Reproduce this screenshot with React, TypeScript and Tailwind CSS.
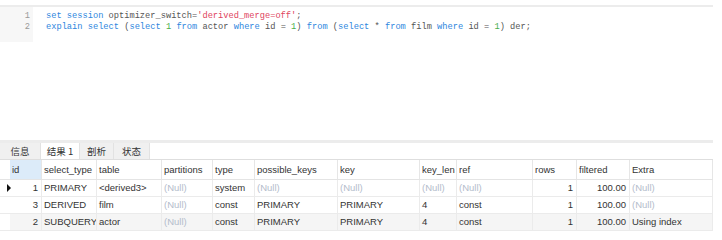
import React from 'react';

type Cell = { text: string; nul?: boolean; right?: boolean };

const cols = [
  { name: 'id', w: 32 },
  { name: 'select_type', w: 55 },
  { name: 'table', w: 65 },
  { name: 'partitions', w: 51 },
  { name: 'type', w: 42 },
  { name: 'possible_keys', w: 83 },
  { name: 'key', w: 82 },
  { name: 'key_len', w: 37 },
  { name: 'ref', w: 76 },
  { name: 'rows', w: 44 },
  { name: 'filtered', w: 53 },
  { name: 'Extra', w: 83 },
];

const N: Cell = { text: '(Null)', nul: true };
const t = (text: string): Cell => ({ text });
const r = (text: string): Cell => ({ text, right: true });

const rows: Cell[][] = [
  [r('1'), t('PRIMARY'), t('<derived3>'), N, t('system'), N, N, N, N, r('1'), r('100.00'), N],
  [r('3'), t('DERIVED'), t('film'), N, t('const'), t('PRIMARY'), t('PRIMARY'), t('4'), t('const'), r('1'), r('100.00'), N],
  [r('2'), t('SUBQUERY'), t('actor'), N, t('const'), t('PRIMARY'), t('PRIMARY'), t('4'), t('const'), r('1'), r('100.00'), t('Using index')],
];

const K = ({ children }: { children: React.ReactNode }) => <span className="text-[#2e86de]">{children}</span>;
const S = ({ children }: { children: React.ReactNode }) => <span className="text-[#e0445e]">{children}</span>;
const G = ({ children }: { children: React.ReactNode }) => <span className="text-[#4cae4c]">{children}</span>;

const tabs = ['信息', '结果 1', '剖析', '状态'];
const tabWidths = ['w-[41px]', 'w-[39px]', 'w-[34px]', 'w-[36px]'];

export default function App() {
  return (
    <div className="w-[722px] h-[240px] bg-white overflow-hidden font-['Liberation_Sans','Noto_Sans_CJK_SC',sans-serif] text-[#333]">
      {/* editor */}
      <div className="w-[713px] mt-[5px] h-[135px] border-t-2 border-[#ececec]">
        <div className="flex font-['Liberation_Mono','DejaVu_Sans_Mono',monospace] text-[8.7px] leading-[11px] text-[#555]">
          <div className="w-[33px] bg-[#f7f7f7] pt-[4px] pb-[9px] pr-[3px] text-right text-[#999]">
            <div>1</div>
            <div>2</div>
          </div>
          <div className="pl-[13px] pt-[4px] whitespace-pre">
            <div>
              <K>set</K> <K>session</K> optimizer_switch=<S>'derived_merge=off'</S>;
            </div>
            <div>
              <K>explain</K> <K>select</K> (<K>select</K> <G>1</G> <K>from</K> actor <K>where</K> id = <G>1</G>) <K>from</K> (<K>select</K> * <K>from</K> film <K>where</K> id = <G>1</G>) der;
            </div>
          </div>
        </div>
      </div>

      {/* result panel */}
      <div className="w-[713px]">
        <div className="h-[3px] bg-[#ececec]" />
        <div className="flex h-[17px] border-b border-[#dedede] text-[9.5px] leading-[17px] font-['Noto_Sans_CJK_SC',sans-serif]">
          {tabs.map((tab, i) => (
            <div
              key={tab}
              className={`${tabWidths[i]} text-center border-r border-[#e2e2e2] ${i === 1 ? 'bg-white' : 'bg-[#f0f0f0]'}`}
            >
              {tab}
            </div>
          ))}
        </div>

        <div className="text-[9.5px]">
          <div className="flex h-[20px] leading-[20px] border-b border-[#e4e4e4]">
            <div className="w-[10px] shrink-0" />
            {cols.map((c, i) => (
              <div
                key={c.name}
                style={{ width: c.w }}
                className={`shrink-0 pl-[2px] border-r border-[#e6e6e6] whitespace-nowrap ${i === 0 ? 'bg-[#dcebf9]' : ''}`}
              >
                {c.name}
              </div>
            ))}
          </div>
          {rows.map((row, ri) => (
            <div key={ri} className={`flex h-[17px] leading-[16px] border-b border-[#ebebeb] ${ri === 2 ? 'bg-[#f5f5f5]' : ''}`}>
              <div className="w-[10px] shrink-0 bg-white flex items-center pl-[7px]">
                {ri === 0 && (
                  <svg className="shrink-0" width="4" height="8" viewBox="0 0 4 8">
                    <path d="M0 0 L4 4 L0 8 Z" fill="#111" />
                  </svg>
                )}
              </div>
              {row.map((cell, ci) => (
                <div
                  key={ci}
                  style={{ width: cols[ci].w }}
                  className={`shrink-0 border-r border-[#ebebeb] whitespace-nowrap overflow-hidden ${cell.right ? 'text-right pr-[3px]' : 'pl-[2px]'} ${cell.nul ? 'text-[#b3bccb]' : ''}`}
                >
                  {cell.text}
                </div>
              ))}
            </div>
          ))}
        </div>
      </div>
    </div>
  );
}
